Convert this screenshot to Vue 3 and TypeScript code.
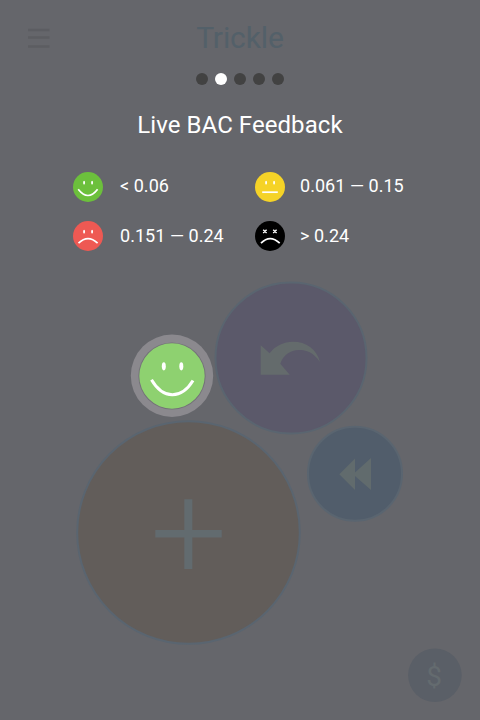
<script setup lang="ts">
interface Level {
  label: string
  color: string
  mood: 'happy' | 'neutral' | 'sad' | 'dead'
}

const levels: Level[] = [
  { label: '< 0.06', color: '#6cc03c', mood: 'happy' },
  { label: '0.061 — 0.15', color: '#f5d327', mood: 'neutral' },
  { label: '0.151 — 0.24', color: '#ee5953', mood: 'sad' },
  { label: '> 0.24', color: '#000000', mood: 'dead' },
]

const mouths: Record<Level['mood'], string> = {
  happy: 'M5.2 17.2Q15 29.8 24.600 17.2',
  neutral: 'M7.2 20.2H22.8',
  sad: 'M5.500 22.2Q15 13 24.600 22.2',
  dead: 'M6 22.2Q15 13 24.700 22.2',
}

const pages = 5
const activePage = 2
</script>

<template>
  <main class="screen">
    <header class="bar">
      <svg class="menu" width="22" height="20" viewBox="0 0 22 20">
        <path d="M0 2H21.500M0 9.500H21.500M0 18.500H21.500" />
      </svg>
      <h1 class="brand">Trickle</h1>
    </header>
    <nav class="dots">
      <span v-for="n in pages" :key="n" class="dot" :class="{ active: n === activePage }"></span>
    </nav>
    <h2 class="heading">Live BAC Feedback</h2>
    <ul class="levels">
      <li v-for="level in levels" :key="level.mood" class="level">
        <svg class="face" width="30" height="30" viewBox="0 0 30 30">
          <circle cx="15" cy="15" r="15" :fill="level.color" />
          <path v-if="level.mood === 'dead'" class="cross" d="M8.2 8.700l3.400 3.400m0-3.400l-3.400 3.400M18.200 8.700l3.400 3.400m0-3.400l-3.400 3.400" />
          <g v-else fill="#fff">
            <ellipse cx="11.100" cy="10.700" rx="0.950" ry="1.900" />
            <ellipse cx="19.100" cy="10.700" rx="0.950" ry="1.900" />
          </g>
          <path class="mouth" :d="mouths[level.mood]" />
        </svg>
        <span class="range">{{ level.label }}</span>
      </li>
    </ul>
    <svg class="bubbles" width="480" height="450" viewBox="0 270 480 450">
      <g class="rim">
        <circle cx="291" cy="358" r="75.500" fill="#5b596a" />
        <circle cx="355" cy="473.800" r="47" fill="#515d6b" />
        <circle cx="188.500" cy="532.500" r="111.300" fill="#625d5a" />
      </g>
      <path fill="#646b6c" d="M260.700 345.300L269.600 353.300C275 346 284 341.800 293 341.800C306 341.800 316.500 349 320 362C313 352 306.500 350 299 350C290 350 283 355.500 280.300 363.700L289.700 374.700H260.700Z" />
      <path fill="#616b6d" d="M339.300 474.300L355 458.500V472.500L371 458V490L355 476V490Z" />
      <path fill="#626b6f" d="M184.300 499.300h8v30.800h29.400v7.400h-29.400V569h-8V537.500h-29v-7.400h29Z" />
      <circle cx="434.900" cy="675.300" r="26.800" fill="#5a5f67" />
      <text class="dollar" x="434.200" y="686">$</text>
      <circle cx="172" cy="375.700" r="41.200" fill="#8b898e" />
      <circle class="shade" cx="172" cy="376" r="33.600" />
      <circle cx="172" cy="376" r="32.700" fill="#8ed170" />
      <ellipse cx="163.800" cy="366.300" rx="2" ry="4.100" fill="#fff" />
      <ellipse cx="181.300" cy="366.300" rx="2" ry="4.100" fill="#fff" />
      <path class="smile" d="M151.500 379.700C163 399.500 181.500 399.500 193 380.500" />
    </svg>
  </main>
</template>

<style>
body {
  margin: 0;
  background: #65666b;
}
</style>

<style scoped>
.screen {
  display: flex;
  flex-direction: column;
  width: 480px;
  height: 720px;
  overflow: hidden;
  background: #65666b;
  color: #fff;
  font-family: Roboto, "Liberation Sans", sans-serif;
}
.bar {
  display: grid;
  grid-template-columns: 78px 1fr 78px;
  align-items: center;
  height: 73px;
  padding-top: 3px;
  box-sizing: border-box;
}
.menu {
  margin-left: 28px;
}
.menu path {
  stroke: #5c5d62;
  stroke-width: 2.600;
}
.brand {
  margin: 0;
  text-align: center;
  font-size: 30px;
  font-weight: 400;
  line-height: 36px;
  letter-spacing: -0.1px;
  color: #536069;
}
.dots {
  display: flex;
  justify-content: center;
  gap: 7px;
  height: 12px;
}
.dot {
  width: 12px;
  height: 12px;
  border-radius: 50%;
  background: #424242;
}
.dot.active {
  background: #fff;
}
.heading {
  margin: 25px 0 0;
  height: 30px;
  text-align: center;
  font-size: 24px;
  font-weight: 400;
  line-height: 30px;
  letter-spacing: 0.06px;
}
.levels {
  display: grid;
  grid-template-columns: 182px 1fr;
  grid-template-rows: 30px 30px;
  row-gap: 19px;
  margin: 32px 0 19px;
  padding: 0 0 0 73px;
  list-style: none;
}
.level {
  display: flex;
  align-items: center;
  gap: 17px;
}
.level:nth-child(even) {
  gap: 15px;
}
.range {
  font-size: 18px;
  line-height: 24px;
  padding-bottom: 2px;
  white-space: nowrap;
  letter-spacing: 0.040px;
}
.level:nth-child(n + 3) .range {
  padding-bottom: 0;
}
.mouth,
.cross {
  fill: none;
  stroke: #fff;
  stroke-width: 1.700;
}
.cross {
  stroke-width: 1.400;
}
.bubbles {
  display: block;
  flex: none;
}
.rim circle {
  stroke: #5a6570;
  stroke-width: 2;
}
.shade {
  fill: #737078;
}
.smile {
  fill: none;
  stroke: #fff;
  stroke-width: 3;
}
.dollar {
  font-size: 28px;
  text-anchor: middle;
  fill: #646b6f;
}
</style>
